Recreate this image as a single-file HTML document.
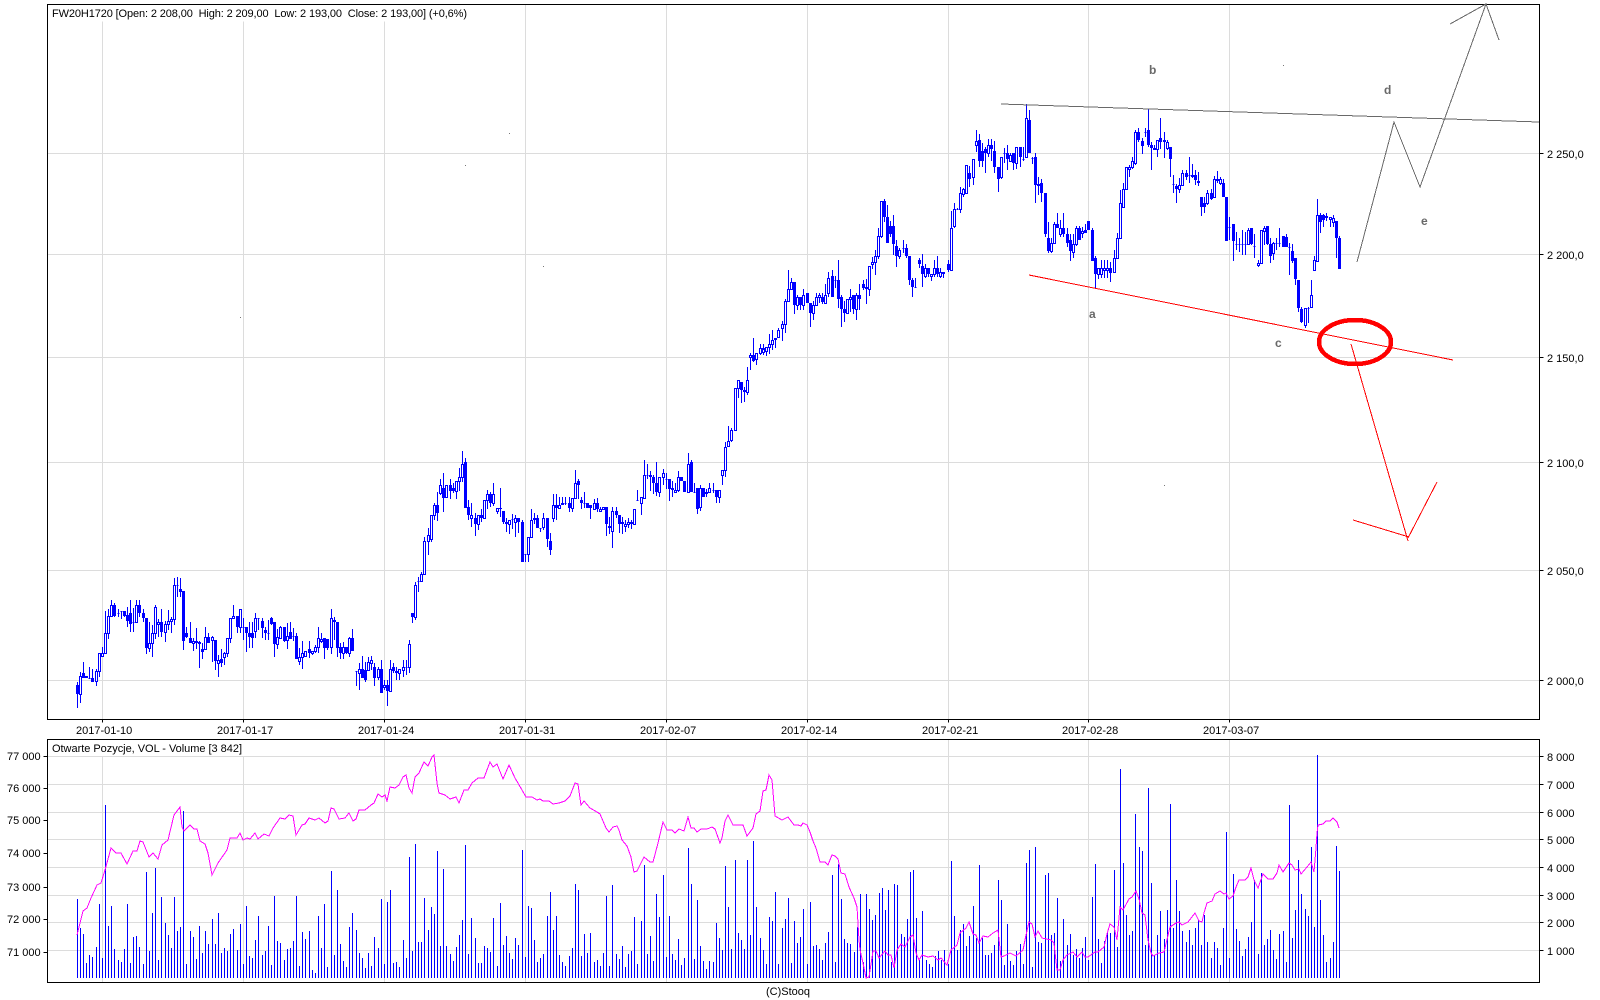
<!DOCTYPE html>
<html>
<head>
<meta charset="utf-8">
<title>FW20H1720</title>
<style>
html,body{margin:0;padding:0;background:#fff;width:1600px;height:1000px;overflow:hidden}
svg{display:block}
text{font-family:"Liberation Sans",Arial,sans-serif;font-size:11px;fill:#000;white-space:pre}
.n{font-weight:bold;font-size:12px;fill:#696969}
</style>
</head>
<body>
<svg width="1600" height="1000" viewBox="0 0 1600 1000" xmlns="http://www.w3.org/2000/svg" shape-rendering="crispEdges">
<rect width="1600" height="1000" fill="#fff"/>

<!-- grid -->
<g transform="translate(.5 .5)" stroke="#dcdcdc" fill="none">
<path d="M47 153H1539M47 254H1539M47 357H1539M47 462H1539M47 570H1539M47 680H1539"/>
<path d="M102 21V719M243 21V719M384 21V719M525 4V719M666 4V719M807 4V719M948 4V719M1088 4V719M1229 4V719"/>
<path d="M47 756H1539M47 784H1539M47 812H1539M47 839H1539M47 867H1539M47 895H1539M47 922H1539M47 950H1539"/>
<path d="M102 756V982M243 756V982M384 739V982M525 739V982M666 739V982M807 739V982M948 739V982M1088 739V982M1229 739V982"/>
</g>
<rect x="48" y="5" width="422" height="16" fill="#fff"/>

<!-- frames and ticks -->
<g transform="translate(.5 .5)" stroke="#000" fill="none">
<path d="M47 4H1539V719H47zM47 739H1539V982H47z"/>
<path d="M1539 153h4M1539 254h4M1539 357h4M1539 462h4M1539 570h4M1539 680h4"/>
<path d="M102 719v3M243 719v3M384 719v3M525 719v3M666 719v3M807 719v3M948 719v3M1088 719v3M1229 719v3"/>
<path d="M1539 756h4M1539 784h4M1539 812h4M1539 839h4M1539 867h4M1539 895h4M1539 922h4M1539 950h4"/>
<path d="M43 756h4M43 788h4M43 820h4M43 853h4M43 887h4M43 919h4M43 952h4"/>
</g>

<!-- candle wicks -->
<path transform="translate(.5 0)" fill="none" stroke="#00f" d="M77 682V708M80 672V703M83 662V678M89 667V678M92 669V682M96 669V686M99 653V677M102 647V656M105 611V653M108 609V639M111 600V617M114 603V617M118 609V617M121 611V619M124 611V617M127 607V627M130 600V632M133 608V632M136 600V622M139 600V617M143 609V622M146 618V654M149 622V652M152 625V657M155 605V639M158 619V637M161 609V637M165 621V642M168 610V630M171 617V633M174 578V625M177 577V597M180 578V597M183 591V650M186 627V638M190 622V643M193 638V651M196 628V649M199 641V668M202 643V659M205 627V649M208 633V643M212 636V662M215 640V670M218 655V677M221 649V667M224 652V665M227 638V657M230 618V643M233 605V618M237 616V633M240 609V633M243 618V640M246 627V652M249 622V648M252 622V648M255 613V638M258 618V630M262 618V638M265 627V640M268 620V640M271 617V625M274 622V657M277 629V649M280 626V639M284 627V642M287 623V649M290 622V638M293 628V641M296 633V659M299 648V665M302 641V669M305 651V657M309 641V658M312 651V655M315 645V653M318 627V653M321 633V643M324 638V659M327 639V650M331 609V654M334 617V640M337 622V657M340 643V659M343 642V659M346 647V654M349 637V657M352 629V651M356 671V686M359 663V690M362 656V678M365 662V682M368 657V670M371 656V670M374 663V686M378 667V680M381 660V693M384 680V690M387 680V706M390 660V692M393 663V673M396 667V680M399 669V680M403 660V677M406 660V675M409 640V673M412 613V623M415 582V620M418 577V592M421 572V581M424 537V575M428 528V555M431 515V542M434 503V520M437 492V521M440 479V495M443 473V512M446 485V498M450 479V499M453 483V493M456 481V499M459 468V491M462 451V482M465 458V508M468 500V520M471 503V527M475 513V536M478 515V530M481 509V522M484 500V518M487 490V509M490 492V507M493 483V506M497 508V514M500 488V517M503 511V524M506 518V532M509 520V534M512 514V529M515 515V537M518 518V533M522 520V562M525 554V562M528 537V562M531 509V538M534 513V524M537 515V528M540 528V532M543 513V530M547 518V547M550 533V555M553 494V522M556 494V520M559 497V508M562 497V505M565 497V505M569 497V512M572 498V512M575 470V499M578 479V499M581 497V509M584 492V508M587 503V508M590 505V519M594 499V510M597 498V512M600 507V512M603 507V510M606 507V536M609 517V534M612 507V548M616 507V518M619 515V533M622 517V534M625 520V532M628 518V528M631 520V529M634 509V524M637 490V500M641 497V515M644 460V498M647 464V479M650 471V491M653 475V494M656 462V496M659 477V497M663 469V485M666 473V489M669 479V501M672 481V497M675 483V492M678 471V492M681 477V481M684 481V492M688 453V492M691 460V492M694 483V492M697 488V514M700 485V511M703 488V497M706 489V497M709 483V493M713 483V493M716 490V503M719 490V503M722 470V485M725 442V477M728 426V447M731 428V442M735 388V430M738 380V398M741 382V403M744 387V402M747 367V395M750 353V370M753 338V362M756 353V365M760 344V355M763 344V355M766 347V356M769 334V354M772 330V350M775 338V348M778 328V337M782 321V341M785 299V333M788 270V301M791 278V289M794 282V314M797 295V310M800 297V310M803 289V310M807 293V303M810 303V327M813 301V320M816 293V305M819 293V303M822 293V304M825 284V303M828 272V297M832 270V297M835 276V288M838 260V308M841 295V327M844 301V322M847 299V314M850 289V312M853 295V314M856 293V320M859 284V310M863 280V290M866 279V304M869 266V296M872 257V269M875 250V275M878 228V259M881 201V238M884 199V222M887 205V243M890 221V237M893 215V255M896 240V267M899 248V259M903 240V253M906 244V258M909 256V285M912 278V297M915 278V287M919 258V268M922 254V287M925 264V278M928 268V277M931 274V281M934 260V277M937 256V277M940 268V278M943 272V278M948 260V272M951 211V270M954 203V228M957 208V210M960 187V213M963 188V197M966 165V193M969 166V187M973 159V185M976 130V152M979 134V167M982 143V167M985 147V173M988 139V157M991 139V161M994 141V173M998 167V192M1001 157V179M1004 148V163M1007 145V170M1010 153V161M1013 153V170M1016 147V169M1020 147V167M1023 147V161M1026 104V157M1029 110V153M1032 157V164M1035 153V203M1038 177V195M1041 179V202M1045 193V237M1048 222V253M1051 238V253M1054 222V243M1057 213V228M1060 220V237M1063 213V237M1067 228V247M1070 234V261M1073 234V258M1076 226V246M1079 226V240M1082 227V238M1085 224V233M1088 221V230M1092 228V261M1095 256V288M1098 268V279M1101 260V278M1104 260V278M1107 260V278M1110 262V282M1114 250V272M1117 233V258M1120 190V239M1123 183V207M1126 167V190M1129 165V177M1132 157V169M1135 130V165M1138 128V142M1142 138V154M1145 128V137M1148 109V147M1151 142V170M1154 145V150M1157 140V157M1160 118V149M1164 132V158M1167 140V150M1170 147V177M1173 175V193M1176 184V203M1179 178V193M1182 170V185M1186 170V180M1189 157V183M1192 164V178M1195 170V185M1198 172V186M1201 197V216M1204 197V213M1207 190V205M1211 189V200M1214 176V198M1217 171V183M1220 177V185M1223 179V197M1226 197V241M1229 217V240M1233 224V261M1236 232V250M1239 238V252M1242 230V255M1245 232V255M1248 228V245M1251 228V245M1254 234V258M1258 260V267M1261 230V263M1264 226V245M1267 226V245M1270 238V263M1273 242V260M1276 238V250M1279 228V247M1283 236V247M1286 234V247M1289 243V275M1292 244V263M1295 258V285M1298 280V312M1301 307V323M1305 308V328M1308 307V323M1311 280V307M1314 256V271M1317 199V262M1320 213V233M1323 214V227M1326 213V221M1330 217V227M1333 215V227M1336 221V258M1339 236V269"/>

<!-- solid candle bodies -->
<path transform="translate(.5 0)" fill="none" stroke="#00f" stroke-width="3" d="M77 685V694M83 673V678M86 676V678M92 678V682M114 605V616M124 611V616M127 615V621M130 613V624M139 605V613M143 613V618M146 618V648M161 622V632M180 589V592M183 591V641M186 633V637M190 638V643M196 641V643M199 642V644M202 649V652M208 637V643M215 640V661M221 659V663M237 616V627M246 627V633M249 633V637M252 633V638M262 621V628M265 630V633M271 618V624M274 622V644M284 627V641M290 632V639M296 636V659M309 649V653M324 638V648M327 639V648M334 620V622M337 622V648M340 647V653M346 647V653M352 638V651M362 669V678M365 670V680M374 667V678M381 669V693M387 685V691M393 667V671M396 671V673M412 613V617M437 505V513M443 488V498M450 485V491M453 488V491M465 462V508M468 507V515M475 518V524M481 515V518M490 494V503M500 508V509M503 511V522M506 522V524M518 518V522M522 522V562M534 518V520M537 518V528M547 518V539M550 541V550M556 505V508M562 503V505M569 503V508M578 481V485M581 500V503M587 503V508M590 505V508M597 503V509M606 507V524M609 526V528M616 511V515M619 515V524M622 522V524M631 522V524M650 475V477M653 477V483M656 483V492M669 479V489M672 488V490M681 477V481M684 481V492M691 462V492M697 488V509M703 488V497M706 492V494M716 490V497M741 382V390M744 390V392M753 355V361M763 348V353M775 338V340M794 282V305M800 297V305M807 293V303M810 303V313M822 297V302M832 276V297M838 280V299M841 297V309M844 309V313M853 295V309M859 295V299M863 284V288M866 287V289M884 201V217M887 217V243M890 226V234M893 226V244M896 246V256M906 248V256M909 256V280M912 280V287M919 260V264M922 266V274M928 268V274M937 268V274M943 272V274M948 264V270M969 173V179M979 140V161M982 151V161M985 149V153M991 145V149M994 151V167M998 167V179M1007 153V159M1013 153V163M1020 147V157M1029 120V153M1035 157V185M1041 183V193M1045 193V234M1048 238V251M1057 224V228M1063 228V234M1067 234V243M1070 240V251M1079 228V240M1085 230V233M1088 221V230M1092 230V261M1095 258V274M1110 268V273M1138 132V140M1142 141V146M1148 130V145M1151 145V148M1160 138V142M1164 140V142M1170 147V159M1176 186V189M1186 173V177M1195 175V180M1198 181V183M1201 197V207M1204 203V207M1211 193V199M1217 179V181M1223 183V197M1226 197V241M1233 224V241M1251 228V244M1267 226V244M1270 244V256M1283 236V247M1286 237V247M1292 251V261M1295 258V279M1298 280V308M1301 309V322M1320 215V222M1323 215V220M1326 216V218M1336 221V238M1339 238V269"/>

<!-- hollow candle bodies and flat marks -->
<path transform="translate(.5 .5)" fill="#fff" stroke="#00f" d="M79 676h2V694h-2zM88 678h2M95 671h2V681h-2zM98 653h2V671h-2zM101 653h2V656h-2zM104 633h2V653h-2zM107 616h2V633h-2zM110 605h2V616h-2zM117 613h2M120 611h2M132 622h2M135 605h2V622h-2zM148 643h2V648h-2zM151 633h2V643h-2zM154 607h2V633h-2zM157 622h2V624h-2zM164 624h2V632h-2zM167 621h2V624h-2zM170 619h2V621h-2zM173 585h2V619h-2zM176 585h2M192 641h2V643h-2zM204 637h2V649h-2zM211 637h2V640h-2zM217 660h2V663h-2zM223 653h2V657h-2zM226 638h2V653h-2zM229 618h2V638h-2zM232 616h2V618h-2zM239 609h2V627h-2zM242 627h2M254 618h2V631h-2zM257 618h2M267 633h2M276 637h2V644h-2zM279 627h2V638h-2zM286 636h2V640h-2zM292 636h2M298 657h2V661h-2zM301 653h2V657h-2zM304 651h2V656h-2zM311 651h2V653h-2zM314 647h2V651h-2zM317 638h2V647h-2zM320 639h2V641h-2zM330 618h2V647h-2zM342 647h2V653h-2zM348 638h2V653h-2zM355 671h2M358 669h2V673h-2zM367 662h2V670h-2zM370 660h2V663h-2zM377 669h2V677h-2zM383 685h2V687h-2zM389 669h2V691h-2zM398 669h2V673h-2zM402 667h2V670h-2zM405 667h2M408 644h2V667h-2zM414 585h2V617h-2zM417 581h2M420 574h2V581h-2zM423 541h2V574h-2zM427 535h2V541h-2zM430 515h2V539h-2zM433 505h2V515h-2zM439 485h2V493h-2zM445 485h2V497h-2zM455 481h2V491h-2zM458 477h2V481h-2zM461 464h2V477h-2zM470 515h2V518h-2zM477 515h2V524h-2zM483 500h2V518h-2zM486 494h2V500h-2zM492 494h2V503h-2zM496 508h2V511h-2zM508 520h2V524h-2zM511 519h2M514 518h2V522h-2zM524 554h2M527 537h2V554h-2zM530 520h2V537h-2zM539 528h2M542 518h2V527h-2zM552 505h2V518h-2zM558 505h2V508h-2zM564 503h2M571 498h2V508h-2zM574 483h2V498h-2zM583 503h2M593 503h2V509h-2zM599 509h2V511h-2zM602 507h2V509h-2zM611 511h2V531h-2zM624 524h2V526h-2zM627 522h2V524h-2zM633 509h2V524h-2zM636 500h2M640 497h2V503h-2zM643 475h2V498h-2zM646 475h2M658 477h2V492h-2zM662 473h2V477h-2zM665 479h2M674 490h2V492h-2zM677 477h2V490h-2zM687 464h2V492h-2zM693 492h2M699 488h2V507h-2zM708 488h2V492h-2zM712 490h2M718 490h2V497h-2zM721 470h2V475h-2zM724 447h2V470h-2zM727 441h2V446h-2zM730 430h2V440h-2zM734 388h2V430h-2zM737 380h2V388h-2zM746 380h2V392h-2zM749 355h2V357h-2zM755 353h2V359h-2zM759 348h2V353h-2zM762 349h2V352h-2zM765 347h2V351h-2zM768 344h2V347h-2zM771 340h2V344h-2zM777 330h2V337h-2zM781 324h2V328h-2zM784 301h2V324h-2zM787 289h2V301h-2zM790 282h2V289h-2zM796 297h2V305h-2zM802 295h2V305h-2zM812 305h2V313h-2zM815 297h2V305h-2zM818 295h2V297h-2zM824 295h2V303h-2zM827 278h2V293h-2zM834 280h2M846 299h2V313h-2zM849 297h2V299h-2zM855 295h2V309h-2zM868 266h2V289h-2zM871 262h2V264h-2zM874 256h2V262h-2zM877 236h2V256h-2zM880 201h2V236h-2zM898 250h2V256h-2zM902 248h2M914 287h2M924 268h2V276h-2zM930 274h2V276h-2zM933 268h2V274h-2zM939 272h2V276h-2zM950 228h2V270h-2zM953 209h2V226h-2zM956 209h2M959 193h2V209h-2zM962 189h2V194h-2zM965 165h2V193h-2zM972 159h2V177h-2zM975 141h2V145h-2zM987 145h2V153h-2zM1000 157h2V177h-2zM1003 153h2M1009 155h2V161h-2zM1015 147h2V163h-2zM1022 159h2M1025 118h2V157h-2zM1031 158h2M1037 184h2V185h-2zM1050 243h2V251h-2zM1053 224h2V243h-2zM1059 228h2V234h-2zM1072 244h2V252h-2zM1075 228h2V244h-2zM1081 231h2V233h-2zM1097 268h2V274h-2zM1100 268h2V274h-2zM1103 268h2V270h-2zM1106 268h2V270h-2zM1113 258h2V272h-2zM1116 238h2V258h-2zM1119 203h2V238h-2zM1122 189h2V207h-2zM1125 167h2V189h-2zM1128 167h2V169h-2zM1131 161h2V167h-2zM1134 132h2V163h-2zM1144 132h2M1153 148h2V149h-2zM1156 140h2V149h-2zM1166 142h2V148h-2zM1172 184h2M1178 185h2V189h-2zM1181 173h2V185h-2zM1188 175h2M1191 175h2V176h-2zM1206 193h2V203h-2zM1213 179h2V197h-2zM1219 179h2V183h-2zM1228 227h2M1235 244h2M1238 244h2M1241 244h2M1244 244h2M1247 230h2V244h-2zM1253 246h2M1257 263h2V265h-2zM1260 230h2V263h-2zM1263 228h2V231h-2zM1272 243h2V253h-2zM1275 243h2M1278 243h2M1288 247h2M1304 308h2V325h-2zM1307 308h2M1310 295h2V307h-2zM1313 260h2V270h-2zM1316 215h2V261h-2zM1329 217h2V219h-2zM1332 218h2V222h-2z"/>

<!-- volume bars -->
<path transform="translate(.5 0)" fill="none" stroke="#00f" d="M77 899V978M80 928V978M83 934V978M86 963V978M89 955V978M92 957V978M96 947V978M99 904V978M102 958V978M105 805V978M108 926V978M111 906V978M114 949V978M118 960V978M121 962V978M124 949V978M127 904V978M130 963V978M133 937V978M136 936V978M139 947V978M143 964V978M146 872V978M149 951V978M152 913V978M155 868V978M158 960V978M161 897V978M165 923V978M168 935V978M171 948V978M174 897V978M177 931V978M180 927V978M183 811V978M186 964V978M190 931V978M193 937V978M196 959V978M199 926V978M202 953V978M205 931V978M208 944V978M212 919V978M215 944V978M218 913V978M221 953V978M224 948V978M227 951V978M230 934V978M233 929V978M237 950V978M240 924V978M243 964V978M246 906V978M249 956V978M252 958V978M255 940V978M258 916V978M262 955V978M265 951V978M268 926V978M271 965V978M274 896V978M277 941V978M280 943V978M284 960V978M287 949V978M290 948V978M293 941V978M296 896V978M299 966V978M302 932V978M305 939V978M309 931V978M312 970V978M315 973V978M318 916V978M321 948V978M324 904V978M327 967V978M331 871V978M334 955V978M337 890V978M340 944V978M343 961V978M346 967V978M349 927V978M352 913V978M356 930V978M359 953V978M362 958V978M365 968V978M368 953V978M371 966V978M374 937V978M378 948V978M381 899V978M384 964V978M387 902V978M390 890V978M393 963V978M396 962V978M399 967V978M403 940V978M406 958V978M409 857V978M412 951V978M415 844V978M418 942V978M421 942V978M424 898V978M428 930V978M431 907V978M434 914V978M437 851V978M440 946V978M443 869V978M446 946V978M450 954V978M453 961V978M456 947V978M459 935V978M462 920V978M465 845V978M468 954V978M471 918V978M475 938V978M478 963V978M481 963V978M484 946V978M487 948V978M490 952V978M493 918V978M497 966V978M500 903V978M503 945V978M506 936V978M509 953V978M512 959V978M515 938V978M518 945V978M522 850V978M525 957V978M528 906V978M531 908V978M534 940V978M537 962V978M540 958V978M543 954V978M547 916V978M550 892V978M553 930V978M556 916V978M559 955V978M562 962V978M565 966V978M569 956V978M572 948V978M575 884V978M578 890V978M581 956V978M584 934V978M587 953V978M590 933V978M594 962V978M597 960V978M600 966V978M603 953V978M606 896V978M609 966V978M612 885V978M616 954V978M619 959V978M622 946V978M625 967V978M628 954V978M631 951V978M634 917V978M637 964V978M641 921V978M644 865V978M647 954V978M650 936V978M653 961V978M656 894V978M659 917V978M663 875V978M666 957V978M669 916V978M672 954V978M675 960V978M678 939V978M681 965V978M684 958V978M688 848V978M691 884V978M694 959V978M697 900V978M700 946V978M703 961V978M706 969V978M709 961V978M713 962V978M716 923V978M719 938V978M722 950V978M725 866V978M728 907V978M731 949V978M735 860V978M738 933V978M741 940V978M744 949V978M747 860V978M750 935V978M753 841V978M756 907V978M760 938V978M763 950V978M766 964V978M769 917V978M772 921V978M775 892V978M778 964V978M782 928V978M785 919V978M788 898V978M791 963V978M794 921V978M797 943V978M800 937V978M803 909V978M807 964V978M810 902V978M813 946V978M816 945V978M819 949V978M822 960V978M825 943V978M828 932V978M832 875V978M835 962V978M838 864V978M841 899V978M844 939V978M847 943V978M850 944V978M854 952V978M857 927V978M860 894V978M863 962V978M866 894V978M869 909V978M872 920V978M875 915V978M879 893V978M882 888V978M885 910V978M888 890V978M891 962V978M894 884V978M897 885V978M901 934V978M904 937V978M907 919V978M910 872V978M913 870V978M916 918V978M919 960V978M922 911V978M926 960V978M929 964V978M932 967V978M935 956V978M938 951V978M941 960V978M944 950V978M948 964V978M951 861V978M954 916V978M957 950V978M960 930V978M963 924V978M966 946V978M969 936V978M973 906V978M976 938V978M979 865V978M982 938V978M985 955V978M988 955V978M991 953V978M994 945V978M998 880V978M1001 900V978M1004 965V978M1007 924V978M1010 961V978M1013 965V978M1016 951V978M1020 944V978M1023 964V978M1026 863V978M1029 850V978M1032 967V978M1035 847V978M1038 942V978M1041 943V978M1045 875V978M1048 873V978M1051 935V978M1054 933V978M1057 898V978M1060 961V978M1063 919V978M1067 945V978M1070 934V978M1073 955V978M1076 949V978M1079 958V978M1082 948V978M1085 937V978M1088 960V978M1092 897V978M1095 864V978M1098 939V978M1101 963V978M1104 941V978M1107 933V978M1110 933V978M1114 870V978M1117 947V978M1120 769V978M1123 863V978M1126 915V978M1129 935V978M1132 931V978M1135 814V978M1139 847V978M1142 851V978M1145 945V978M1148 788V978M1151 883V978M1154 955V978M1157 935V978M1160 911V978M1164 939V978M1167 910V978M1170 804V978M1173 928V978M1176 880V978M1179 911V978M1182 931V978M1186 942V978M1189 930V978M1192 945V978M1195 928V978M1198 920V978M1201 945V978M1204 915V978M1207 942V978M1211 958V978M1214 942V978M1217 948V978M1220 965V978M1223 928V978M1226 832V978M1229 958V978M1233 874V978M1236 929V978M1239 941V978M1242 956V978M1245 949V978M1248 937V978M1251 922V978M1254 880V978M1258 954V978M1261 873V978M1264 945V978M1267 939V978M1270 930V978M1273 950V978M1276 959V978M1279 934V978M1283 931V978M1286 962V978M1289 805V978M1292 938V978M1295 910V978M1298 860V978M1301 894V978M1305 909V978M1308 916V978M1311 847V978M1314 927V978M1317 755V978M1320 900V978M1323 935V978M1326 962V978M1330 958V978M1333 942V978M1336 846V978M1339 871V978"/>

<!-- open interest line -->
<polyline fill="none" stroke="#f0f" points="77,935 79,927 83,911 87,908 91,898 97,885 101,883 105,870 111,848 116,853 121,853 127,864 133,851 137,851 140,841 143,842 147,852 149,857 153,853 158,859 162,845 168,840 174,815 180,807 182,827 184,831 190,825 194,829 197,829 200,841 205,844 208,853 212,875 218,863 227,850 230,838 237,838 240,833 243,840 247,838 250,839 255,833 258,839 264,834 269,836 273,828 280,818 285,819 289,815 293,816 296,835 302,825 305,824 309,818 315,820 319,818 325,823 328,821 331,808 334,809 339,819 345,818 349,813 353,821 356,819 359,810 365,810 371,805 374,803 378,794 382,797 385,795 387,801 390,787 395,788 399,785 403,777 406,775 409,788 412,793 415,777 419,773 424,762 428,766 432,757 434,755 437,783 439,793 445,795 450,799 456,797 459,803 464,790 468,790 472,783 478,778 484,778 490,762 493,767 497,764 503,779 509,765 515,778 522,790 526,797 532,797 537,800 540,799 543,801 549,801 553,804 559,803 565,801 570,796 575,783 578,784 581,805 584,801 590,808 597,812 600,814 606,828 609,832 613,827 617,826 619,830 622,840 627,846 631,857 634,872 637,871 644,857 650,862 653,862 658,843 663,822 667,830 672,830 675,833 679,829 684,831 688,817 691,828 694,828 697,832 701,829 707,829 712,827 715,829 720,843 722,838 725,821 728,815 733,825 738,825 743,825 747,836 753,828 756,814 760,811 763,791 766,790 769,775 772,780 775,816 782,820 788,817 794,825 798,825 801,826 803,823 807,825 810,832 813,841 816,848 820,862 825,862 828,865 832,855 835,856 838,859 841,873 845,874 849,887 854,898 857,907 859,940 860,950 863,963 866,978 869,977 873,951 876,951 879,958 885,951 888,955 891,955 894,968 897,950 901,944 905,947 910,937 913,935 916,953 919,960 922,955 928,957 933,956 938,960 941,958 947,965 951,950 957,945 960,933 966,928 969,922 973,934 976,935 979,943 983,936 988,937 993,933 998,930 1001,957 1004,956 1010,953 1016,956 1023,950 1026,935 1029,922 1032,924 1035,937 1038,931 1042,938 1051,940 1054,943 1057,970 1060,970 1063,960 1067,955 1073,952 1077,957 1082,952 1085,957 1088,957 1095,952 1098,952 1104,947 1107,934 1110,924 1114,927 1117,940 1120,907 1123,910 1129,899 1132,897 1136,891 1139,899 1142,913 1145,915 1148,940 1151,953 1153,956 1159,953 1164,952 1170,927 1173,925 1176,923 1179,922 1182,925 1188,922 1195,913 1199,921 1202,922 1204,913 1207,903 1212,901 1215,894 1220,891 1224,894 1226,893 1229,899 1233,896 1236,887 1239,880 1245,880 1248,877 1251,868 1254,880 1258,888 1263,874 1268,879 1273,879 1277,873 1279,865 1283,872 1289,863 1292,865 1295,870 1299,869 1301,874 1307,867 1311,862 1314,872 1316,848 1317,833 1318,825 1323,824 1326,821 1330,821 1333,818 1337,822 1339,828"/>

<!-- drawn annotations -->
<g fill="none" stroke="#696969">
<path d="M1001 104L1539 122"/>
<path d="M1357 262L1394 122L1420 187L1486 4L1499 40M1450 24L1486 4"/>
</g>
<g fill="none" stroke="#f00">
<path d="M1029 275L1453 360"/>
<path d="M1351 344L1408 541M1353 520L1409 537M1408 538L1437 482"/>
<ellipse cx="1355" cy="342" rx="36" ry="22" stroke-width="4.5"/>
</g>
<g fill="#777">
<rect x="240" y="317" width="1" height="1"/>
<rect x="465" y="165" width="1" height="1"/>
<rect x="509" y="133" width="1" height="1"/>
<rect x="543" y="266" width="1" height="1"/>
<rect x="1164" y="485" width="1" height="1"/>
<rect x="1283" y="65" width="1" height="1"/>
</g>

<g shape-rendering="auto">
<text class="n" x="1089" y="318">a</text>
<text class="n" x="1149" y="74">b</text>
<text class="n" x="1275" y="347">c</text>
<text class="n" x="1384" y="94">d</text>
<text class="n" x="1421" y="225">e</text>

<text x="52" y="17" textLength="415">FW20H1720 [Open: 2 208,00  High: 2 209,00  Low: 2 193,00  Close: 2 193,00] (+0,6%)</text>
<text x="52" y="752" textLength="190">Otwarte Pozycje, VOL - Volume [3 842]</text>

<text x="1547" y="158">2 250,0</text>
<text x="1547" y="259">2 200,0</text>
<text x="1547" y="362">2 150,0</text>
<text x="1547" y="467">2 100,0</text>
<text x="1547" y="575">2 050,0</text>
<text x="1547" y="685">2 000,0</text>

<text x="76" y="734">2017-01-10</text>
<text x="217" y="734">2017-01-17</text>
<text x="358" y="734">2017-01-24</text>
<text x="499" y="734">2017-01-31</text>
<text x="640" y="734">2017-02-07</text>
<text x="781" y="734">2017-02-14</text>
<text x="922" y="734">2017-02-21</text>
<text x="1062" y="734">2017-02-28</text>
<text x="1203" y="734">2017-03-07</text>

<text x="7" y="760">77 000</text>
<text x="7" y="792">76 000</text>
<text x="7" y="824">75 000</text>
<text x="7" y="857">74 000</text>
<text x="7" y="891">73 000</text>
<text x="7" y="923">72 000</text>
<text x="7" y="956">71 000</text>

<text x="1547" y="761">8 000</text>
<text x="1547" y="789">7 000</text>
<text x="1547" y="817">6 000</text>
<text x="1547" y="844">5 000</text>
<text x="1547" y="872">4 000</text>
<text x="1547" y="900">3 000</text>
<text x="1547" y="927">2 000</text>
<text x="1547" y="955">1 000</text>

<text x="766" y="995">(C)Stooq</text>
</g>
</svg>
</body>
</html>
